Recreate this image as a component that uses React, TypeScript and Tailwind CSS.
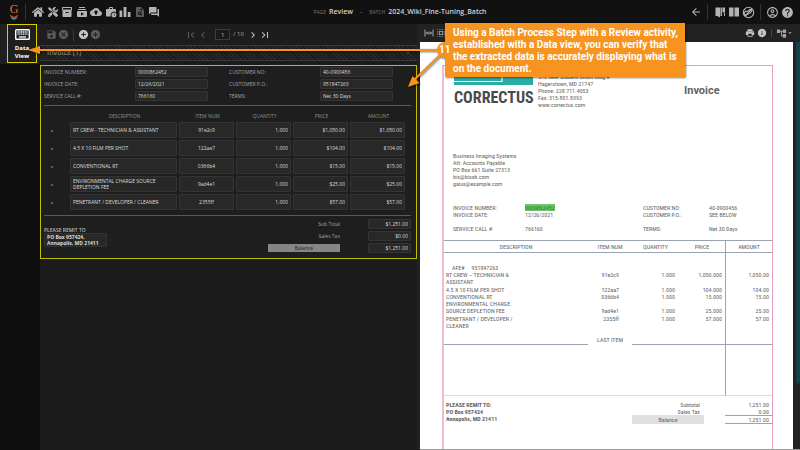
import React from "react";
import {
  MdInventory2, MdSubscriptions, MdBackup, MdWorkHistory, MdPlagiarism, MdForum,
  MdArrowBack, MdOutlineAccountCircle, MdHelp, MdPrint, MdInfo, MdAccountTree,
  MdSave, MdCancel, MdAddCircle, MdFirstPage, MdChevronLeft, MdChevronRight, MdLastPage,
  MdArrowDropDown, MdSelectAll,
} from "react-icons/md";
import { FaTools, FaHome } from "react-icons/fa";

function BarsIcon({ size = 12, className = "" }: { size?: number; className?: string }) {
  return (
    <svg viewBox="0 0 12 12" width={size} height={size} className={className} fill="currentColor">
      <path d="M.5 4.500h2.700V11H.5zM4.600 1h2.800v10H4.600zM8.800 6h2.700v5H8.800z" />
    </svg>
  );
}

const tools = [
  { label: "Home", Icon: FaHome },
  { label: "Design", Icon: FaTools },
  { label: "Batches", Icon: MdInventory2 },
  { label: "Tasks", Icon: MdSubscriptions },
  { label: "Imports", Icon: MdBackup },
  { label: "Jobs", Icon: MdWorkHistory },
  { label: "Stats", Icon: BarsIcon },
  { label: "Search", Icon: MdPlagiarism, dim: true },
  { label: "Chat", Icon: MdForum },
];

const items = [
  { desc: "RT CREW - TECHNICIAN & ASSISTANT", num: "91e2c9", qty: "1.000", price: "$1,050.00", amount: "$1,050.00" },
  { desc: "4.5 X 10 FILM PER SHOT", num: "122aa7", qty: "1.000", price: "$104.00", amount: "$104.00" },
  { desc: "CONVENTIONAL RT", num: "0366b4", qty: "1.000", price: "$15.00", amount: "$15.00" },
  { desc: "ENVIRONMENTAL CHARGE SOURCE\nDEPLETION FEE", num: "9ad4e1", qty: "1.000", price: "$25.00", amount: "$25.00" },
  { desc: "PENETRANT / DEVELOPER / CLEANER", num: "2355ff", qty: "1.000", price: "$57.00", amount: "$57.00" },
];

const lines = [
  { desc: ["RT CREW – TECHNICIAN &", "ASSISTANT"], num: "91e2c9", qty: "1.000", price: "1,050.000", amount: "1,050.00" },
  { desc: ["4.5 X 10 FILM PER SHOT"], num: "122aa7", qty: "1.000", price: "104.000", amount: "104.00" },
  { desc: ["CONVENTIONAL RT"], num: "0366b4", qty: "1.000", price: "15.000", amount: "15.00" },
  { desc: ["ENVIRONMENTAL CHARGE", "SOURCE DEPLETION FEE"], num: "9ad4e1", qty: "1.000", price: "25.000", amount: "25.00", low: true },
  { desc: ["PENETRANT / DEVELOPER /", "CLEANER"], num: "2355ff", qty: "1.000", price: "57.000", amount: "57.00" },
];

const box = "block w-full rounded-[1px] border border-[#343434] bg-[#282828] px-[2px] text-[#dedede] outline-none";

function IconButton({ label, className = "", children }: { label: string; className?: string; children: React.ReactNode }) {
  return (
    <button type="button" aria-label={label} className={"flex shrink-0 items-center justify-center " + className}>
      {children}
    </button>
  );
}

function TopBar() {
  return (
    <header className="grid h-6 shrink-0 grid-cols-[1fr_auto_1fr] items-center bg-[#111111] text-[#b4b4b4]">
      <nav className="flex items-center pl-2">
        <span className="flex w-3 flex-col items-center">
          <span className="font-['Liberation_Serif',serif] text-[12px] leading-[9px] text-[#f0722a]">G</span>
          <svg viewBox="0 0 10 5" className="mt-px h-[5px] w-[10px]" fill="none" strokeWidth="1.2">
            <path d="M1 .5l4 2 4-2" stroke="#e0443a" />
            <path d="M2 2.500l3 1.800 3-1.800" stroke="#2bb3a8" />
          </svg>
        </span>
        <span className="ml-[5px] mr-[6px] h-4 w-px bg-[#333]" />
        <div className="flex w-[128px] items-center justify-between">
          {tools.map(({ label, Icon, dim }) => (
            <IconButton key={label} label={label} className={dim ? "text-[#5c5c5c]" : ""}>
              <Icon size={label === "Design" ? 10 : 12} className="mx-auto w-[12px]" />
            </IconButton>
          ))}
        </div>
      </nav>
      <div className="flex items-center text-[7px] leading-[10px]">
        <span className="text-[5px] text-[#777]">PAGE</span>
        <span className="ml-[3px] font-semibold text-[#d0d0d0]">Review</span>
        <span className="mx-[7px] text-[#777]">-</span>
        <span className="text-[5px] text-[#777]">BATCH</span>
        <span className="ml-[3px] font-semibold text-[#d0d0d0]">2024_Wiki_Fine-Tuning_Batch</span>
      </div>
      <div className="flex items-center justify-end gap-[2px] pr-[6px]">
        <IconButton label="Back"><MdArrowBack size={12} /></IconButton>
        <span className="ml-[3px] mr-[4px] h-4 w-px bg-[#333]" />
        <IconButton label="Guide">
          <svg viewBox="0 0 12 12" width="12" height="12" fill="currentColor">
            <path d="M1.500 1.500h1.700v8.500H1.500zM3.200 1.500h2.800v10L3.200 10zM6.500 1.500H8v8.500H6.500zM8.500 1.500h2.500v5H8.500zM10 7h1v3h-1z" />
          </svg>
        </IconButton>
        <IconButton label="Columns">
          <svg viewBox="0 0 12 12" width="12" height="12" fill="currentColor">
            <path d="M1 1.500h4.500v9H1zM6.500 1.500H11v9H6.500z" />
          </svg>
        </IconButton>
        <IconButton label="Link">
          <svg viewBox="0 0 12 12" width="13" height="13" fill="none" stroke="currentColor">
            <circle cx="6" cy="6" r="4.800" />
            <path d="M2.800 9.200L9.200 2.800" strokeWidth="1.200" />
            <path d="M5 5.300l2-2a1.300 1.300 0 0 1 1.800 1.800L7 7M5 5a1.300 1.300 0 0 0-1.800 3.600L6.500 7" />
          </svg>
        </IconButton>
        <span className="mx-[3px] h-4 w-px bg-[#333]" />
        <IconButton label="Account"><MdOutlineAccountCircle size={13} /></IconButton>
        <IconButton label="Help"><MdHelp size={13} /></IconButton>
      </div>
    </header>
  );
}

function PanelToolbar() {
  return (
    <div className="flex h-[21px] items-center bg-[#1d1d1d] pl-[6px] text-[#5c5c5c]">
      <IconButton label="Save"><MdSave size={11} /></IconButton>
      <IconButton label="Cancel" className="ml-px"><MdCancel size={11} /></IconButton>
      <span className="mx-[4px] h-3 w-px bg-[#3a3a3a]" />
      <IconButton label="Add" className="text-[#c4c4c4]"><MdAddCircle size={11} /></IconButton>
      <IconButton label="Add below" className="ml-px"><MdAddCircle size={11} /></IconButton>
      <div className="mx-auto flex items-center pl-[32px] pr-[94px]">
        <IconButton label="First"><MdFirstPage size={12} /></IconButton>
        <IconButton label="Previous"><MdChevronLeft size={12} /></IconButton>
        <input aria-label="Page number" defaultValue="1" className="ml-[6px] h-[11px] w-[15px] border border-[#3c3c3c] bg-[#1a1a1a] text-center text-[6px] leading-[9px] text-[#bbb] outline-none" />
        <span className="ml-[3px] text-[6px] leading-[9px] text-[#aaa]">/ 10</span>
        <IconButton label="Next" className="ml-[3px] text-[#c4c4c4]"><MdChevronRight size={12} /></IconButton>
        <IconButton label="Last" className="text-[#c4c4c4]"><MdLastPage size={12} /></IconButton>
      </div>
    </div>
  );
}

function Field({ id, label, value }: { id: string; label: string; value: string }) {
  return (
    <div className="grid grid-cols-[91px_1fr] items-center">
      <label htmlFor={id} className="text-[#a2a2a2]">{label}</label>
      <input id={id} defaultValue={value} className={box + " h-[10px] leading-[8px]"} />
    </div>
  );
}

function DataForm() {
  return (
    <form className="border border-[#c4bc00] bg-[#1e1e1e] pb-[5px] pl-[3px] pr-[5px] pt-px text-[5px] leading-[6px]">
      <div className="mr-[18px] grid grid-cols-2 gap-x-[21px] gap-y-[2px]">
        <Field id="invoice-number" label="INVOICE NUMBER:" value="0000862452" />
        <Field id="customer-no" label="CUSTOMER NO:" value="40-0900456" />
        <Field id="invoice-date" label="INVOICE DATE:" value="12/26/2021" />
        <Field id="customer-po" label="CUSTOMER P.O.:" value="951847263" />
        <Field id="service-call" label="SERVICE CALL #:" value="766160" />
        <Field id="terms" label="TERMS:" value="Net 30 Days" />
      </div>
      <div className="mt-[4px] border-y border-[#5a5a5a] pb-[3px] pr-[4px] pt-[4px]">
        <table className="w-full table-fixed border-collapse">
          <colgroup>
            <col className="w-[26px]" />
            <col />
            <col className="w-[57px]" />
            <col className="w-[57px]" />
            <col className="w-[57px]" />
            <col className="w-[57px]" />
          </colgroup>
          <thead className="text-[#8e8e8e]">
            <tr className="h-[12px]">
              <th aria-label="Row" />
              <th className="font-normal">DESCRIPTION</th>
              <th className="font-normal">ITEM NUM</th>
              <th className="font-normal">QUANTITY</th>
              <th className="font-normal">PRICE</th>
              <th className="font-normal">AMOUNT</th>
            </tr>
          </thead>
          <tbody>
            {items.map((r) => (
              <tr key={r.num}>
                <td className="p-0 pr-[10px] text-center text-[#8e8e8e]">=</td>
                <td className="p-0 pb-[2px] pr-[2px]">
                  {r.desc.includes("\n") ? (
                    <textarea aria-label="Description" defaultValue={r.desc} rows={2} className={box + " h-[16px] resize-none overflow-hidden py-px"} />
                  ) : (
                    <input aria-label="Description" defaultValue={r.desc} className={box + " h-[16px]"} />
                  )}
                </td>
                <td className="p-0 pb-[2px] pr-[2px]"><input aria-label="Item num" defaultValue={r.num} className={box + " h-[16px] text-center"} /></td>
                <td className="p-0 pb-[2px] pr-[2px]"><input aria-label="Quantity" defaultValue={r.qty} className={box + " h-[16px] text-right"} /></td>
                <td className="p-0 pb-[2px] pr-[2px]"><input aria-label="Price" defaultValue={r.price} className={box + " h-[16px] text-right"} /></td>
                <td className="p-0 pb-[2px] pr-[2px]"><input aria-label="Amount" defaultValue={r.amount} className={box + " h-[16px] text-right"} /></td>
              </tr>
            ))}
          </tbody>
        </table>
      </div>
      <div className="flex justify-between pt-[3px]">
        <div className="w-[63px] pt-[8px]">
          <label htmlFor="remit" className="block whitespace-nowrap font-semibold text-[#bdbdbd]">PLEASE REMIT TO</label>
          <textarea id="remit" rows={2} defaultValue={"PO Box 957424,\nAnnapolis, MD 21411"} className={box + " h-[14px] resize-none overflow-hidden font-bold"} />
        </div>
        <div className="grid grid-cols-[72px_43px] items-center gap-x-[28px] gap-y-[2px] text-right text-[#a2a2a2]">
          <label htmlFor="sub">Sub Total</label>
          <input id="sub" defaultValue="$1,251.00" className={box + " h-[10px] text-right leading-[8px]"} />
          <label htmlFor="tax">Sales Tax</label>
          <input id="tax" defaultValue="$0.00" className={box + " h-[10px] text-right leading-[8px]"} />
          <label htmlFor="bal" className="bg-[#858585] py-px text-center text-[#222]">Balance</label>
          <input id="bal" defaultValue="$1,251.00" className={box + " h-[10px] text-right leading-[8px]"} />
        </div>
      </div>
    </form>
  );
}

function Invoice() {
  return (
    <article className="flex-1 bg-white pl-[22px] pr-[20px] pt-[23px] font-['Roboto_Condensed','Roboto',sans-serif] text-[6px] leading-[7px] text-[#646464]">
      <div className="h-full border-r border-t border-l-2 border-[#ea9cba] border-l-[#eebcd0]">
        <div className="grid grid-cols-[84px_1fr_88px] pl-[10px] pt-[7px]">
          <div className="w-[79px]">
            <svg viewBox="0 0 79 12" className="block h-[12px] w-full">
              <path d="M0 0h79v12H0z" fill="#2aada5" />
              <path d="M0 8.500h48V0" fill="none" stroke="#fff" strokeWidth="1.200" />
            </svg>
            <div className="text-[16px] font-bold leading-[26px] text-[#4a4a4a]">CORRECTUS</div>
          </div>
          <address className="not-italic">
            512 New Student Union Bldg #<br />Hagerstown, MD 21747<br />Phone: 228.711.4053<br />Fax: 315.801.8393<br />www.correctus.com
          </address>
          <h1 className="pt-[11px] font-['Roboto',sans-serif] text-[11px] font-bold leading-[14px]">Invoice</h1>
        </div>
        <div className="pl-[9px] pt-[41px]">
          Business Imaging Systems<br />Att: Accounts Payable<br />PO Box 661 Suite 27313<br />bis@bisok.com<br />gaius@example.com
        </div>
        <div className="grid grid-cols-[72px_1fr_66px_63px] pb-[8px] pl-[9px] pt-[17px]">
          <span>INVOICE NUMBER:</span><span><mark className="bg-[#6cc66c] text-[#2f7a35]">0000862452</mark></span><span>CUSTOMER NO:</span><span>40-0900456</span>
          <span>INVOICE DATE:</span><span>12/26/2021</span><span>CUSTOMER P.O.:</span><span>SEE BELOW</span>
          <span className="pt-[7px]">SERVICE CALL #:</span><span className="pt-[7px]">766160</span><span className="pt-[7px]">TERMS:</span><span className="pt-[7px]">Net 30 Days</span>
        </div>
        <table className="w-full table-fixed border-separate border-spacing-0">
          <colgroup>
            <col />
            <col className="w-[44px]" />
            <col className="w-[47px]" />
            <col className="w-[46px]" />
            <col className="w-[47px]" />
          </colgroup>
          <thead>
            <tr className="h-[13px]">
              {["DESCRIPTION", "ITEM NUM", "QUANTITY", "PRICE"].map((h) => (
                <th key={h} className="border-y border-[#9aa3b2] p-0 font-normal">{h}</th>
              ))}
              <th className="border-y border-l border-[#9aa3b2] p-0 font-normal">AMOUNT</th>
            </tr>
          </thead>
          <tbody>
            <tr>
              <td colSpan={4} className="whitespace-pre p-0 pl-[8px] pt-[11px]">AFE#     951847263</td>
              <td className="border-l border-[#9aa3b2]" />
            </tr>
            {lines.map((r) => {
              const edge = r.low ? "align-bottom pb-px" : "align-top";
              return (
                <tr key={r.num} className={r.desc.length > 1 ? "h-[15px]" : "h-[7px]"}>
                  <td className="p-0 pl-[2px] align-top">{r.desc.map((d) => <div key={d}>{d}</div>)}</td>
                  <td className={"px-0 text-right pr-[13px] " + edge}>{r.num}</td>
                  <td className={"px-0 text-right pr-[4px] " + edge}>{r.qty}</td>
                  <td className={"px-0 text-right pr-[3px] " + edge}>{r.price}</td>
                  <td className={"border-l border-[#9aa3b2] px-0 text-right pr-[3px] " + edge}>{r.amount}</td>
                </tr>
              );
            })}
            <tr className="h-[15px]">
              <td className="border-b border-[#9aa3b2]" />
              <td className="p-0 pb-[2px] text-center align-bottom">LAST ITEM</td>
              <td className="border-b border-[#9aa3b2]" />
              <td className="border-b border-[#9aa3b2]" />
              <td className="border-b border-l border-[#9aa3b2]" />
            </tr>
            <tr className="h-[51px]">
              <td colSpan={4} className="border-b border-[#dcdcdc]" />
              <td className="border-b border-l border-[#dcdcdc] border-l-[#9aa3b2]" />
            </tr>
          </tbody>
        </table>
        <div className="flex justify-between pt-[5px]">
          <div className="pl-[2px] font-bold">PLEASE REMIT TO:<br />PO Box 957424<br />Annapolis, MD 21411</div>
          <div className="grid grid-cols-[72px_47px] gap-x-[21px] text-right">
            <span className="pr-[4px]">Subtotal</span><span className="pr-[3px]">1,251.00</span>
            <span className="pr-[4px]">Sales Tax</span><span className="pr-[3px]">0.00</span>
            <span className="bg-[#e0e0e0] py-px text-center">Balance</span>
            <span className="border-y border-[#9aa3b2] pr-[3px]">1,251.00</span>
          </div>
        </div>
      </div>
    </article>
  );
}

function Viewer() {
  return (
    <section className="flex min-w-0 flex-1 flex-col bg-[#222] pl-[3px]">
      <div className="flex h-[18px] shrink-0 items-center pl-[4px] pr-[6px] text-[#aaa]">
        <IconButton label="Fit width">
          <svg viewBox="0 0 10 10" width="10" height="10" fill="none" stroke="currentColor">
            <path d="M1 1.500v7M9 1.500v7M2.500 5h5M4 3.500L2.500 5 4 6.500M6 3.500L7.500 5 6 6.500" />
          </svg>
        </IconButton>
        <IconButton label="Select" className="ml-[2px]"><MdSelectAll size={10} /></IconButton>
        <span className="flex-1" />
        <IconButton label="Print" className="mr-[2px] text-[#c4c4c4]"><MdPrint size={10} /></IconButton>
        <IconButton label="Info" className="text-[#c4c4c4]"><MdInfo size={10} /></IconButton>
        <span className="mx-[4px] h-2 w-px bg-[#444]" />
        <IconButton label="Tree" className="text-[#a4a4a4]"><MdAccountTree size={11} /><MdArrowDropDown size={8} className="-ml-px" /></IconButton>
      </div>
      <div className="flex min-h-0 flex-1 border-b border-[#999]">
        <Invoice />
        <div className="ml-[3px] w-[4px] bg-[#222]">
          <div className="h-[84%] rounded-b-[2px] bg-[#12444a]" />
        </div>
      </div>
    </section>
  );
}

function Callout() {
  return (
    <>
      <svg className="pointer-events-none absolute left-0 top-0 h-[100px] w-[460px] drop-shadow-[1px_1px_1px_rgba(0,0,0,0.6)]" viewBox="0 0 460 100">
        <g stroke="#f7941f" strokeWidth="2" fill="#f7941f">
          <path d="M445 50H38M445 50L414 80" />
          <g stroke="none">
            <path d="M28 50l12-4v8z" />
            <path d="M408 87l4.500-11 7 7z" />
            <circle cx="445" cy="50" r="8" />
          </g>
        </g>
      </svg>
      <div className="absolute left-[445px] top-[23px] w-[240px] bg-[#f7941f] pb-[2px] pl-[8px] pt-[4px] font-['Roboto',sans-serif] text-[10px] font-bold leading-[12px] text-white shadow-[1px_1px_2px_rgba(0,0,0,0.5)]">
        <span className="absolute -left-[6px] top-[21px]">11</span>
        Using a Batch Process Step with a Review activity,<br />established with a Data view, you can verify that<br />the extracted data is accurately displaying what is<br />on the document.
      </div>
    </>
  );
}

export default function App() {
  return (
    <div className="relative flex h-screen flex-col overflow-hidden bg-[#0f0f0f] font-['Open_Sans','Noto_Sans',sans-serif]">
      <TopBar />
      <main className="flex min-h-0 flex-1">
        <aside className="w-10 shrink-0">
          <div className="bg-[#1f1f1f] pb-px pl-[7px] pr-[3px]">
            <button type="button" className="flex h-[39px] w-full flex-col items-center border border-[#d6cf00] pt-[4px] text-[6px] font-bold leading-[8px] text-white">
              <svg viewBox="0 0 15 11" width="15" height="11" className="mb-[4px]">
                <rect x=".7" y=".7" width="13.600" height="9.600" rx=".8" fill="none" stroke="#fff" strokeWidth="1.400" />
                <path d="M2.500 3h10M2.500 5.200h10" stroke="#fff" strokeWidth="1.300" strokeDasharray="1.200 .56" />
                <path d="M4 8h7" stroke="#fff" strokeWidth="1.300" />
              </svg>
              <span>Data</span>
              <span>View</span>
            </button>
          </div>
        </aside>
        <section className="w-[47.125%] shrink-0 bg-[#1b1b1b]">
          <PanelToolbar />
          <div className="flex h-[16px] items-center justify-between border-y border-[#3a3a3a] bg-[repeating-linear-gradient(45deg,#191919_0_1px,#262626_1px_3px)] pl-[7px] pr-[5px] text-[7px] font-semibold leading-[14px] text-[#8a8a8a]">
            Invoice (1)
            <MdArrowDropDown size={8} className="text-[#555]" />
          </div>
          <div className="pt-[4px]">
            <DataForm />
          </div>
        </section>
        <Viewer />
      </main>
      <Callout />
    </div>
  );
}
